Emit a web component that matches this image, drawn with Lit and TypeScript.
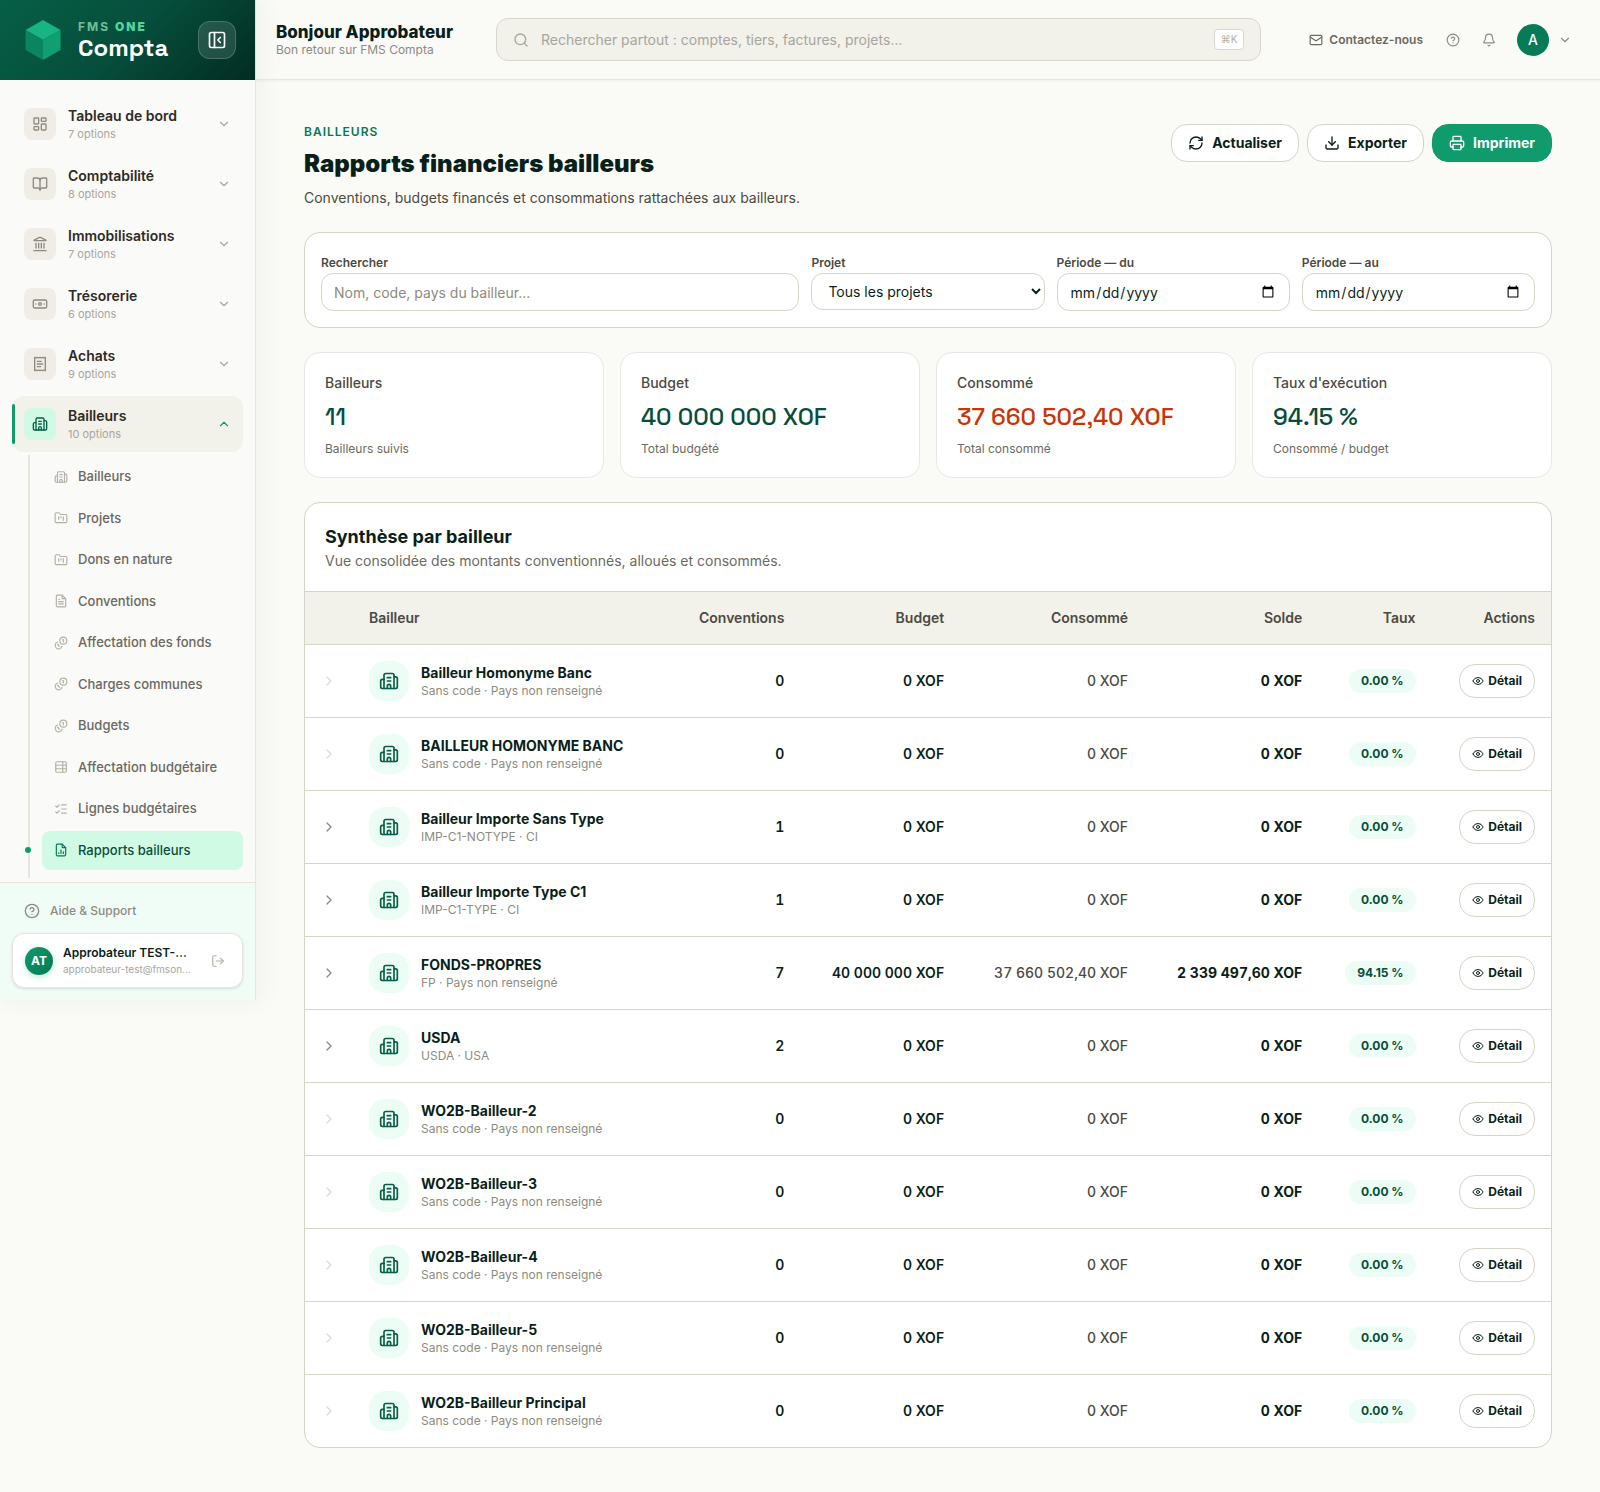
import { LitElement, html, svg, css, nothing } from "lit";
import { customElement, state } from "lit/decorators.js";
import { classMap } from "lit/directives/class-map.js";

const ICONS: Record<string, ReturnType<typeof svg>> = {
  dashboard: svg`<rect width="7" height="9" x="3" y="3" rx="1"/><rect width="7" height="5" x="14" y="3" rx="1"/><rect width="7" height="9" x="14" y="12" rx="1"/><rect width="7" height="5" x="3" y="16" rx="1"/>`,
  book: svg`<path d="M12 7v14"/><path d="M3 18a1 1 0 0 1-1-1V4a1 1 0 0 1 1-1h5a4 4 0 0 1 4 4 4 4 0 0 1 4-4h5a1 1 0 0 1 1 1v13a1 1 0 0 1-1 1h-6a3 3 0 0 0-3 3 3 3 0 0 0-3-3z"/>`,
  landmark: svg`<path d="M10 18v-7"/><path d="M11.12 2.198a2 2 0 0 1 1.76.006l7.866 3.847c.476.233.31.949-.22.949H3.474c-.53 0-.695-.716-.22-.949z"/><path d="M14 18v-7"/><path d="M18 18v-7"/><path d="M3 22h18"/><path d="M6 18v-7"/>`,
  banknote: svg`<rect width="20" height="12" x="2" y="6" rx="2"/><circle cx="12" cy="12" r="2"/><path d="M6 12h.01M18 12h.01"/>`,
  receipt: svg`<path d="M4 2v20l2-1 2 1 2-1 2 1 2-1 2 1 2-1 2 1V2l-2 1-2-1-2 1-2-1-2 1-2-1-2 1Z"/><path d="M14 8H8"/><path d="M16 12H8"/><path d="M13 16H8"/>`,
  building: svg`<path d="M10 12h4"/><path d="M10 8h4"/><path d="M14 21v-3a2 2 0 0 0-4 0v3"/><path d="M6 10H4a2 2 0 0 0-2 2v7a2 2 0 0 0 2 2h16a2 2 0 0 0 2-2V9a2 2 0 0 0-2-2h-2"/><path d="M6 21V5a2 2 0 0 1 2-2h8a2 2 0 0 1 2 2v16"/>`,
  folder: svg`<path d="M4 20h16a2 2 0 0 0 2-2V8a2 2 0 0 0-2-2h-7.93a2 2 0 0 1-1.66-.9l-.82-1.2A2 2 0 0 0 7.93 3H4a2 2 0 0 0-2 2v13c0 1.1.9 2 2 2Z"/><path d="M8 10v4"/><path d="M12 10v2"/><path d="M16 10v6"/>`,
  file: svg`<path d="M6 22a2 2 0 0 1-2-2V4a2 2 0 0 1 2-2h8l6 6v12a2 2 0 0 1-2 2z"/><path d="M14 2v5a1 1 0 0 0 1 1h5"/><path d="M10 9H8"/><path d="M16 13H8"/><path d="M16 17H8"/>`,
  coins: svg`<path d="M13.744 17.736a6 6 0 1 1-7.48-7.48"/><path d="M15 6h1v4"/><path d="m6.134 14.768.866-.5 2 3.464"/><circle cx="16" cy="8" r="6"/>`,
  table: svg`<rect width="18" height="18" x="3" y="3" rx="2"/><path d="M3 9h18"/><path d="M3 15h18"/><path d="M15 3v18"/>`,
  checks: svg`<path d="M13 5h8"/><path d="M13 12h8"/><path d="M13 19h8"/><path d="m3 17 2 2 4-4"/><path d="m3 7 2 2 4-4"/>`,
  report: svg`<path d="M6 22a2 2 0 0 1-2-2V4a2 2 0 0 1 2-2h8l6 6v12a2 2 0 0 1-2 2z"/><path d="M14 2v5a1 1 0 0 0 1 1h5"/><path d="M8 18v-1"/><path d="M12 18v-6"/><path d="M16 18v-3"/>`,
  help: svg`<circle cx="12" cy="12" r="10"/><path d="M9.09 9a3 3 0 0 1 5.83 1c0 2-3 3-3 3"/><path d="M12 17h.01"/>`,
  logout: svg`<path d="m16 17 5-5-5-5"/><path d="M21 12H9"/><path d="M9 21H5a2 2 0 0 1-2-2V5a2 2 0 0 1 2-2h4"/>`,
  panel: svg`<rect width="18" height="18" x="3" y="3" rx="2"/><path d="M9 3v18"/><path d="m16 15-3-3 3-3"/>`,
  search: svg`<circle cx="11" cy="11" r="8"/><path d="m21 21-4.3-4.3"/>`,
  mail: svg`<rect width="20" height="16" x="2" y="4" rx="2"/><path d="m22 7-8.991 5.727a2 2 0 0 1-2.009 0L2 7"/>`,
  bell: svg`<path d="M10.268 21a2 2 0 0 0 3.464 0"/><path d="M3.262 15.326A1 1 0 0 0 4 17h16a1 1 0 0 0 .74-1.673C19.41 13.956 18 12.499 18 8A6 6 0 0 0 6 8c0 4.499-1.411 5.956-2.738 7.326"/>`,
  refresh: svg`<path d="M3 12a9 9 0 0 1 9-9 9.75 9.75 0 0 1 6.74 2.74L21 8"/><path d="M21 3v5h-5"/><path d="M21 12a9 9 0 0 1-9 9 9.75 9.75 0 0 1-6.74-2.74L3 16"/><path d="M8 16H3v5"/>`,
  download: svg`<path d="M12 15V3"/><path d="M21 15v4a2 2 0 0 1-2 2H5a2 2 0 0 1-2-2v-4"/><path d="m7 10 5 5 5-5"/>`,
  printer: svg`<path d="M6 18H4a2 2 0 0 1-2-2v-5a2 2 0 0 1 2-2h16a2 2 0 0 1 2 2v5a2 2 0 0 1-2 2h-2"/><path d="M6 9V3a1 1 0 0 1 1-1h10a1 1 0 0 1 1 1v6"/><rect x="6" y="14" width="12" height="8" rx="1"/>`,
  eye: svg`<path d="M2.062 12.348a1 1 0 0 1 0-.696 10.75 10.75 0 0 1 19.876 0 1 1 0 0 1 0 .696 10.75 10.75 0 0 1-19.876 0"/><circle cx="12" cy="12" r="3"/>`,
  down: svg`<path d="m6 9 6 6 6-6"/>`,
  up: svg`<path d="m18 15-6-6-6 6"/>`,
  right: svg`<path d="m9 18 6-6-6-6"/>`,
};

const icon = (name: string, size: number) => html`
  <svg width=${size} height=${size} viewBox="0 0 24 24" fill="none" stroke="currentColor"
    stroke-width="2" stroke-linecap="round" stroke-linejoin="round" aria-hidden="true">${ICONS[name]}</svg>`;

const base = css`
  :host { display: block; }
  *, *::before, *::after { box-sizing: border-box; }
  svg { display: block; flex: none; }
  button, input, select { font: inherit; color: inherit; margin: 0; }
  button { cursor: pointer; background: none; border: 0; padding: 0; text-align: left; }
  a { color: inherit; text-decoration: none; }
  h1, h2, p, ul { margin: 0; padding: 0; }
  ul { list-style: none; }
`;

const MENU = [
  { label: "Tableau de bord", count: 7, icon: "dashboard" },
  { label: "Comptabilité", count: 8, icon: "book" },
  { label: "Immobilisations", count: 7, icon: "landmark" },
  { label: "Trésorerie", count: 6, icon: "banknote" },
  { label: "Achats", count: 9, icon: "receipt" },
  { label: "Bailleurs", count: 10, icon: "building" },
];

const SUBMENU = [
  { label: "Bailleurs", icon: "building" },
  { label: "Projets", icon: "folder" },
  { label: "Dons en nature", icon: "folder" },
  { label: "Conventions", icon: "file" },
  { label: "Affectation des fonds", icon: "coins" },
  { label: "Charges communes", icon: "coins" },
  { label: "Budgets", icon: "coins" },
  { label: "Affectation budgétaire", icon: "table" },
  { label: "Lignes budgétaires", icon: "checks" },
  { label: "Rapports bailleurs", icon: "report" },
];

@customElement("app-sidebar")
class AppSidebar extends LitElement {
  @state() private open = "Bailleurs";
  @state() private page = "Rapports bailleurs";

  static styles = [base, css`
    :host {
      background: #fafaf8;
      border-right: 1px solid #e7e5dc;
      box-shadow: 4px 0 24px rgba(6, 30, 20, 0.05);
    }
    .brand {
      display: flex; align-items: center; gap: 16px;
      height: 80px; padding: 0 19px 0 24px;
      background: linear-gradient(135deg, #065f46 0%, #064e3b 50%, #022c22 100%);
      color: #fff;
    }
    .names { flex: 1; display: flex; flex-direction: column; }
    .suite { font-size: 12px; line-height: 16px; font-weight: 700; letter-spacing: 2px; color: #6fbf9f; }
    .suite b { color: #4fd6a0; }
    .product { font-family: "Space Grotesk", Inter, sans-serif; font-size: 24px; line-height: 26px; font-weight: 700; }
    .collapse {
      display: grid; place-items: center; width: 38px; height: 38px; border-radius: 12px;
      background: rgba(255, 255, 255, 0.12); border: 1px solid rgba(255, 255, 255, 0.18); color: #fff;
    }
    nav { padding: 16px 12px 4px; }
    .menu { display: flex; flex-direction: column; gap: 4px; }
    .item {
      position: relative; display: flex; align-items: center; gap: 12px; width: 100%;
      padding: 10px 12px; border-radius: 12px; color: #a8a69c;
    }
    .tile {
      display: grid; place-items: center; width: 32px; height: 32px; border-radius: 8px;
      background: #f0ede6; color: #8d8a83;
    }
    .text { flex: 1; }
    .label { display: block; font-size: 14px; line-height: 20px; font-weight: 600; color: #2e2a24; }
    .count { display: block; font-size: 11px; line-height: 16px; color: #a8a69c; }
    .item.open { background: #f2f1ea; color: #0f9b6c; }
    .item.open::before {
      content: ""; position: absolute; left: 0; top: 8px; bottom: 8px; width: 3px;
      border-radius: 2px; background: #0f9b6c;
    }
    .item.open .tile { background: #d1fae5; color: #065f46; }
    .sub {
      display: flex; flex-direction: column; gap: 2px;
      margin: 3px 0 0 16px; padding: 2px 0 8px 12px; border-left: 2px solid #e8e5dd;
    }
    .link {
      position: relative; display: flex; align-items: center; gap: 10px;
      padding: 10px 12px; border-radius: 8px;
      font-size: 13px; line-height: 1.5; font-weight: 500; color: #6b6860;
    }
    .link svg { color: #b3b0a4; }
    .link.current { background: #d1fae5; color: #064e3b; }
    .link.current svg { color: #047857; }
    .link.current::before {
      content: ""; position: absolute; left: -17px; top: 50%; width: 6px; height: 6px;
      margin-top: -3px; border-radius: 50%; background: #0f9b6c;
    }
    .foot {
      display: flex; flex-direction: column; gap: 4px; padding: 10px 12px 12px;
      background: #f0fdf7; border-top: 1px solid #e7e5dc;
    }
    .support {
      display: flex; align-items: center; gap: 10px; padding: 8px 12px;
      font-size: 12px; line-height: 20px; font-weight: 500; color: #8d8a83;
    }
    .user {
      display: flex; align-items: center; gap: 10px; padding: 10px 12px;
      border: 1px solid #e7e5dc; border-radius: 12px; background: #fff;
      box-shadow: 0 1px 3px rgba(0, 0, 0, 0.12);
    }
    .avatar {
      display: grid; place-items: center; flex: none; width: 28px; height: 28px; border-radius: 50%;
      background: linear-gradient(135deg, #0f9b6c, #047857); color: #fff;
      font-size: 12px; font-weight: 700; box-shadow: 0 2px 6px rgba(16, 185, 129, 0.3);
    }
    .who { flex: 1; min-width: 0; white-space: nowrap; }
    .name { font-size: 12px; line-height: 18px; font-weight: 600; color: #0a1f1a; }
    .mail { font-size: 10px; line-height: 15px; color: #a8a69c; }
    .quit { padding: 5px; color: #b3b0a4; }
  `];

  render() {
    return html`
      <div class="brand">
        <svg width="38" height="42" viewBox="0 0 38 42" aria-hidden="true">
          <path d="M19 1 36.500 11 19 21 1.500 11Z" fill="#18b481"/>
          <path d="M1.500 11 19 21V41L1.500 31Z" fill="#0a8560"/>
          <path d="M36.500 11 19 21V41L36.500 31Z" fill="#0f9f70"/>
        </svg>
        <div class="names">
          <span class="suite">FMS <b>ONE</b></span>
          <span class="product">Compta</span>
        </div>
        <button class="collapse" aria-label="Réduire le menu">${icon("panel", 20)}</button>
      </div>
      <nav>
        <ul class="menu">
          ${MENU.map((m) => {
            const open = m.label === this.open;
            return html`<li>
              <button class=${classMap({ item: true, open })} aria-expanded=${open ? "true" : "false"}
                @click=${() => (this.open = open ? "" : m.label)}>
                <span class="tile">${icon(m.icon, 16)}</span>
                <span class="text">
                  <span class="label">${m.label}</span>
                  <span class="count">${m.count} options</span>
                </span>
                ${icon(open ? "up" : "down", 14)}
              </button>
              ${open && m.label === "Bailleurs" ? html`<ul class="sub">
                ${SUBMENU.map((s) => html`<li>
                  <a href="#" class=${classMap({ link: true, current: s.label === this.page })}
                    @click=${(e: Event) => { e.preventDefault(); this.page = s.label; }}>
                    ${icon(s.icon, 14)}${s.label}</a>
                </li>`)}
              </ul>` : nothing}
            </li>`;
          })}
        </ul>
      </nav>
      <div class="foot">
        <a class="support" href="#">${icon("help", 16)}Aide &amp; Support</a>
        <div class="user">
          <span class="avatar">AT</span>
          <div class="who">
            <div class="name">Approbateur TEST-…</div>
            <div class="mail">approbateur-test@fmson…</div>
          </div>
          <button class="quit" aria-label="Se déconnecter">${icon("logout", 14)}</button>
        </div>
      </div>`;
  }
}

@customElement("app-topbar")
class AppTopbar extends LitElement {
  static styles = [base, css`
    .bar {
      display: flex; align-items: center; gap: 40px; height: 80px; padding: 0 28px 0 20px;
      border-bottom: 1px solid #e7e5dc; box-shadow: 0 1px 2px rgba(0, 0, 0, 0.05);
    }
    .hello { flex: none; min-width: 180px; }
    .hi { font-size: 17px; line-height: 20px; font-weight: 800; color: #0a1f1a; }
    .back { font-size: 12px; line-height: 15px; color: #8d8a83; }
    .search {
      flex: 1; display: flex; align-items: center; gap: 12px; min-width: 0; height: 43px;
      padding: 0 16px; border: 1px solid #d9d7cc; border-radius: 12px;
      background: #f2f1ea; color: #a8a69c;
    }
    .search input {
      flex: 1; min-width: 0; border: 0; padding: 0; background: none; outline: 0;
      font-size: 14px; line-height: 20px; color: #0a1f1a;
    }
    .search input::placeholder { color: #a8a69c; opacity: 1; }
    kbd {
      padding: 0 6px; border: 1px solid #d9d7cc; border-radius: 4px; background: #fff;
      font-family: Inter, sans-serif; font-size: 10px; line-height: 19px; color: #b3b0a4;
    }
    .tools { flex: none; display: flex; align-items: center; gap: 8px; color: #8d8a83; }
    .contact {
      display: flex; align-items: center; gap: 6px; padding: 8px;
      font-size: 12px; line-height: 16px; font-weight: 600; color: #6b6860;
    }
    .tool { padding: 7px; }
    .tools .account { display: flex; align-items: center; gap: 9px; margin-left: 6px; }
    .avatar {
      display: grid; place-items: center; width: 32px; height: 32px; border-radius: 50%;
      background: #077a57; color: #fff; font-size: 14px; font-weight: 500;
    }
  `];

  render() {
    return html`<header class="bar">
      <div class="hello">
        <div class="hi">Bonjour Approbateur</div>
        <div class="back">Bon retour sur FMS Compta</div>
      </div>
      <label class="search">
        ${icon("search", 16)}
        <input type="search" aria-label="Rechercher partout"
          placeholder="Rechercher partout : comptes, tiers, factures, projets…">
        <kbd>⌘K</kbd>
      </label>
      <div class="tools">
        <a class="contact" href="#">${icon("mail", 14)}Contactez-nous</a>
        <button class="tool" aria-label="Aide">${icon("help", 14)}</button>
        <button class="tool" aria-label="Notifications">${icon("bell", 14)}</button>
        <button class="account" aria-label="Mon compte"><span class="avatar">A</span>${icon("down", 14)}</button>
      </div>
    </header>`;
  }
}

interface Row {
  name: string; info: string; conv: number;
  budget?: string; used?: string; left?: string; rate?: string;
}

const NONE = "Sans code · Pays non renseigné";
const ROWS: Row[] = [
  { name: "Bailleur Homonyme Banc", info: NONE, conv: 0 },
  { name: "BAILLEUR HOMONYME BANC", info: NONE, conv: 0 },
  { name: "Bailleur Importe Sans Type", info: "IMP-C1-NOTYPE · CI", conv: 1 },
  { name: "Bailleur Importe Type C1", info: "IMP-C1-TYPE · CI", conv: 1 },
  { name: "FONDS-PROPRES", info: "FP · Pays non renseigné", conv: 7,
    budget: "40 000 000", used: "37 660 502,40", left: "2 339 497,60", rate: "94.15" },
  { name: "USDA", info: "USDA · USA", conv: 2 },
  { name: "WO2B-Bailleur-2", info: NONE, conv: 0 },
  { name: "WO2B-Bailleur-3", info: NONE, conv: 0 },
  { name: "WO2B-Bailleur-4", info: NONE, conv: 0 },
  { name: "WO2B-Bailleur-5", info: NONE, conv: 0 },
  { name: "WO2B-Bailleur Principal", info: NONE, conv: 0 },
];

const STATS = [
  { label: "Bailleurs", value: "11", hint: "Bailleurs suivis" },
  { label: "Budget", value: "40 000 000 XOF", hint: "Total budgété" },
  { label: "Consommé", value: "37 660 502,40 XOF", hint: "Total consommé", warn: true },
  { label: "Taux d'exécution", value: "94.15 %", hint: "Consommé / budget" },
];

@customElement("donor-report")
class DonorReport extends LitElement {
  static styles = [base, css`
    main { display: flex; flex-direction: column; gap: 24px; padding: 44px 48px; }
    .head { display: flex; align-items: flex-start; justify-content: space-between; gap: 24px; }
    .eyebrow { font-size: 12px; line-height: 16px; font-weight: 600; letter-spacing: 1px; color: #047857; }
    h1 { margin: 8px 0; font-size: 24px; line-height: 32px; font-weight: 900; color: #0a1f1a; }
    .lead { font-size: 14px; line-height: 20px; color: #4b4a42; }
    .actions { display: flex; gap: 8px; }
    .btn {
      display: flex; align-items: center; gap: 8px; height: 38px; padding: 0 16px;
      border: 1px solid #d6d4c6; border-radius: 16px; background: #fff;
      font-size: 14px; line-height: 20px; font-weight: 700; color: #0a1f1a; white-space: nowrap;
    }
    .btn.primary { background: #0f9b6c; border-color: #0f9b6c; color: #fff; }
    .filters {
      display: grid; grid-template-columns: repeat(5, minmax(0, 1fr)); gap: 12px; padding: 16px;
      border: 1px solid #d6d4c6; border-radius: 16px; background: #fff;
    }
    .field { display: flex; flex-direction: column; }
    .field.wide { grid-column: span 2; }
    .field label { padding-top: 4px; font-size: 12px; line-height: 20px; font-weight: 600; color: #4b4a42; }
    .field input, .field select {
      width: 100%; height: 38px; padding: 0 12px; border: 1px solid #d6d4c6; border-radius: 12px;
      background: #fff; font-size: 14px; color: #0a1f1a;
    }
    .field select { height: 37px; }
    .field input::placeholder { color: #8d8b7e; opacity: 1; }
    .stats { display: grid; grid-template-columns: repeat(4, minmax(0, 1fr)); gap: 16px; }
    .stat {
      display: flex; flex-direction: column; gap: 8px; padding: 20px;
      border: 1px solid #e7e7e4; border-radius: 16px; background: #fff;
    }
    .stat .label { font-size: 14px; line-height: 20px; font-weight: 500; color: #4b4a42; }
    .stat .value {
      font-family: "Space Grotesk", Inter, sans-serif; font-size: 24px; line-height: 32px;
      font-weight: 500; color: #064e3b; white-space: nowrap;
    }
    .stat.warn .value { color: #c73508; }
    .stat .hint { font-size: 12px; line-height: 16px; color: #6b6a5e; }
    .panel { border: 1px solid #d6d4c6; border-radius: 16px; background: #fff; overflow: hidden; }
    .panel header { padding: 20px; }
    h2 { font-size: 18px; line-height: 28px; font-weight: 700; color: #0a1f1a; }
    .panel header p { font-size: 14px; line-height: 20px; color: #6b6a5e; }
    table { width: 100%; border-collapse: collapse; font-size: 14px; line-height: 20px; }
    th, td { padding: 0 16px; text-align: right; white-space: nowrap; border-top: 1px solid #d6d4c6; }
    th { background: #f2f1ea; font-weight: 600; color: #4b4a42; height: 53px; }
    td { height: 73px; font-weight: 600; color: #0a1f1a; }
    tr:last-child td { height: 72px; }
    th.start, td.start { text-align: left; }
    td.num { font-variant-numeric: tabular-nums; }
    .toggle { width: 48px; }
    .toggle button { display: block; color: #8d8b7e; }
    .toggle button:disabled { opacity: 0.3; }
    .donor { display: flex; align-items: center; gap: 12px; }
    .tile {
      display: grid; place-items: center; width: 40px; height: 40px; border-radius: 16px;
      background: #ecfdf5; color: #065f46;
    }
    .name { font-weight: 700; }
    .info { font-size: 12px; line-height: 16px; font-weight: 400; color: #8d8b7e; }
    td.used { font-weight: 500; color: #4b4a42; }
    td.left { font-weight: 700; }
    .rate {
      display: inline-block; padding: 4px 12px; border-radius: 12px; background: #ecfdf5;
      font-size: 12px; line-height: 16px; font-weight: 700; color: #064e3b; vertical-align: middle;
    }
    .detail {
      display: inline-flex; align-items: center; gap: 4px; height: 34px; padding: 0 12px;
      border: 1px solid #d6d4c6; border-radius: 16px; background: #fff; vertical-align: middle;
      font-size: 12px; line-height: 16px; font-weight: 700; color: #0a1f1a;
    }
  `];

  render() {
    return html`<main>
      <div class="head">
        <div>
          <p class="eyebrow">BAILLEURS</p>
          <h1>Rapports financiers bailleurs</h1>
          <p class="lead">Conventions, budgets financés et consommations rattachées aux bailleurs.</p>
        </div>
        <div class="actions">
          <button class="btn">${icon("refresh", 16)}Actualiser</button>
          <button class="btn">${icon("download", 16)}Exporter</button>
          <button class="btn primary">${icon("printer", 16)}Imprimer</button>
        </div>
      </div>

      <form class="filters" @submit=${(e: Event) => e.preventDefault()}>
        <div class="field wide">
          <label for="q">Rechercher</label>
          <input id="q" type="text" placeholder="Nom, code, pays du bailleur...">
        </div>
        <div class="field">
          <label for="project">Projet</label>
          <select id="project"><option>Tous les projets</option></select>
        </div>
        <div class="field">
          <label for="from">Période — du</label>
          <input id="from" type="date">
        </div>
        <div class="field">
          <label for="to">Période — au</label>
          <input id="to" type="date">
        </div>
      </form>

      <section class="stats">
        ${STATS.map((s) => html`<div class=${classMap({ stat: true, warn: !!s.warn })}>
          <span class="label">${s.label}</span>
          <span class="value">${s.value}</span>
          <span class="hint">${s.hint}</span>
        </div>`)}
      </section>

      <section class="panel">
        <header>
          <h2>Synthèse par bailleur</h2>
          <p>Vue consolidée des montants conventionnés, alloués et consommés.</p>
        </header>
        <table>
          <thead>
            <tr>
              <th class="toggle"></th>
              <th class="start">Bailleur</th>
              <th>Conventions</th>
              <th>Budget</th>
              <th>Consommé</th>
              <th>Solde</th>
              <th>Taux</th>
              <th>Actions</th>
            </tr>
          </thead>
          <tbody>
            ${ROWS.map((r) => html`<tr>
              <td class="toggle start">
                <button ?disabled=${r.conv === 0} aria-label="Déplier ${r.name}">${icon("right", 16)}</button>
              </td>
              <td class="start">
                <div class="donor">
                  <span class="tile">${icon("building", 20)}</span>
                  <div><div class="name">${r.name}</div><div class="info">${r.info}</div></div>
                </div>
              </td>
              <td class="num">${r.conv}</td>
              <td class="num">${r.budget ?? "0"} XOF</td>
              <td class="num used">${r.used ?? "0"} XOF</td>
              <td class="num left">${r.left ?? "0"} XOF</td>
              <td><span class="rate">${r.rate ?? "0.00"} %</span></td>
              <td><button class="detail">${icon("eye", 12)}Détail</button></td>
            </tr>`)}
          </tbody>
        </table>
      </section>
    </main>`;
  }
}

@customElement("app-root")
class AppRoot extends LitElement {
  static styles = [base, css`
    :host { font-family: Inter, "Liberation Sans", sans-serif; }
    .page {
      display: grid; grid-template-columns: 256px minmax(0, 1fr); align-items: start;
      min-height: 100vh; background: #fafbf6;
    }
  `];

  render() {
    return html`<div class="page">
      <app-sidebar></app-sidebar>
      <div>
        <app-topbar></app-topbar>
        <donor-report></donor-report>
      </div>
    </div>`;
  }
}
